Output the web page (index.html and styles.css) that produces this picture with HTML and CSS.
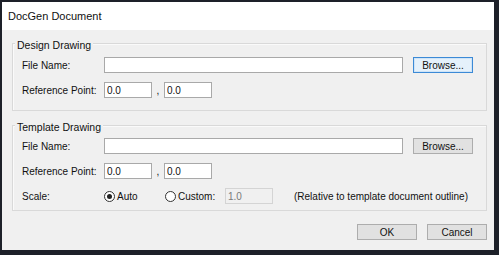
FILE: index.html
```html
<!DOCTYPE html>
<html>
<head>
<meta charset="utf-8">
<link rel="stylesheet" href="styles.css">
</head>
<body>
<div class="window">
  <div class="titlebar">DocGen Document</div>
  <div class="content">
    <div class="group group-design">
      <div class="legend">Design Drawing</div>
      <div class="rows">
        <div class="row">
          <span class="label">File Name:</span>
          <input class="field field-file" type="text" value="">
          <button class="btn btn-default">Browse...</button>
        </div>
        <div class="row">
          <span class="label">Reference Point:</span>
          <input class="field field-num" type="text" value="0.0">
          <span class="comma">,</span>
          <input class="field field-num" type="text" value="0.0">
        </div>
      </div>
    </div>
    <div class="group group-template">
      <div class="legend">Template Drawing</div>
      <div class="rows">
        <div class="row">
          <span class="label">File Name:</span>
          <input class="field field-file" type="text" value="">
          <button class="btn">Browse...</button>
        </div>
        <div class="row">
          <span class="label">Reference Point:</span>
          <input class="field field-num" type="text" value="0.0">
          <span class="comma">,</span>
          <input class="field field-num" type="text" value="0.0">
        </div>
        <div class="row">
          <span class="label">Scale:</span>
          <span class="radio-opt opt-auto"><span class="radio checked"></span>Auto</span>
          <span class="radio-opt opt-custom"><span class="radio"></span>Custom:</span>
          <input class="field field-num field-disabled" type="text" value="1.0" disabled>
          <span class="note">(Relative to template document outline)</span>
        </div>
      </div>
    </div>
    <div class="actions">
      <button class="btn btn-action">OK</button>
      <button class="btn btn-action">Cancel</button>
    </div>
  </div>
</div>
</body>
</html>
```

FILE: styles.css
```css
html, body {
  margin: 0;
  padding: 0;
}
body {
  width: 499px;
  height: 255px;
  background: #1d2029;
  overflow: hidden;
  font-family: "Liberation Sans", Arial, sans-serif;
  font-size: 10px;
  color: #111;
}
.window {
  margin: 2px 0 0 2px;
  width: 492px;
  height: 248px;
  background: #f0f0f0;
  display: flex;
  flex-direction: column;
}
.titlebar {
  height: 28px;
  line-height: 29px;
  background: #ffffff;
  padding-left: 6px;
  font-size: 11px;
  color: #111;
}
.content {
  padding: 13px 0 0 10px;
  display: flex;
  flex-direction: column;
}
.group {
  width: 475px;
  box-sizing: border-box;
  border: 1px solid #d9d9d9;
  box-shadow: inset 1px 1px 0 #fafafa;
}
.group-design {
  padding-bottom: 12px;
}
.group-template {
  margin-top: 14px;
  padding-bottom: 6px;
}
.legend {
  width: fit-content;
  margin: -5px 0 0 2px;
  padding: 0 2px;
  line-height: 12px;
  font-size: 10.5px;
  background: #f0f0f0;
}
.rows {
  display: flex;
  flex-direction: column;
  gap: 9px;
  padding-left: 9px;
}
.group-design .rows {
  margin-top: 6px;
}
.group-template .rows {
  margin-top: 5px;
}
.row {
  display: flex;
  align-items: center;
  height: 16px;
}
.label {
  width: 82px;
  flex: none;
}
.field {
  box-sizing: border-box;
  height: 16px;
  margin: 0;
  padding: 0 2px;
  border: 1px solid #a9a9a9;
  background: #fff;
  font-family: "Liberation Sans", Arial, sans-serif;
  font-size: 10px;
  color: #111;
  outline: none;
  flex: none;
}
.field-file {
  width: 299px;
}
.field-num {
  width: 48px;
}
.field-disabled {
  background: #f0f0f0;
  border-color: #d4d4d4;
  color: #7a7a7a;
}
.comma {
  width: 12px;
  text-align: center;
  flex: none;
}
.btn {
  box-sizing: border-box;
  height: 16px;
  width: 60px;
  margin: 0;
  padding: 0;
  border: 1px solid #adadad;
  background: #e1e1e1;
  font-family: "Liberation Sans", Arial, sans-serif;
  font-size: 10px;
  color: #111;
  flex: none;
}
.group .btn {
  margin-left: 10px;
}
.btn-default {
  border-color: #3c8ad6;
  background: #e5f1fb;
  box-shadow: inset 0 0 0 1px #cfe4f7;
}
.radio-opt {
  display: flex;
  align-items: center;
  flex: none;
}
.opt-auto {
  width: 61px;
}
.opt-custom {
  width: 60px;
}
.radio {
  box-sizing: border-box;
  width: 11px;
  height: 11px;
  border: 1px solid #333;
  border-radius: 50%;
  background: #fff;
  margin-right: 2px;
  display: flex;
  align-items: center;
  justify-content: center;
}
.radio.checked::after {
  content: "";
  width: 5px;
  height: 5px;
  border-radius: 50%;
  background: #222;
}
.note {
  margin-left: 21px;
}
.actions {
  margin-top: 13px;
  width: 475px;
  display: flex;
  justify-content: flex-end;
  gap: 10px;
}
.btn-action {
  height: 16px;
}
```
